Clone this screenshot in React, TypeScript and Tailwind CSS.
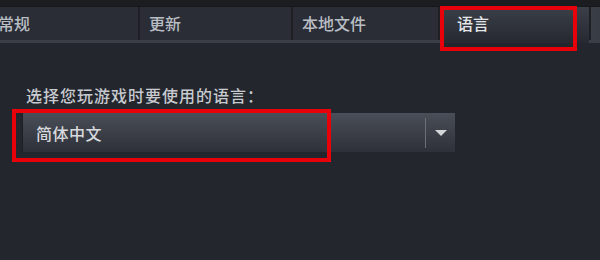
import React from "react";

const tabs = [
  { label: "常规", w: "w-[149px]", active: false },
  { label: "更新", w: "w-[151px]", active: false },
  { label: "本地文件", w: "w-[145px]", active: false },
  { label: "语言", w: "w-[149px]", active: true },
  { label: "", w: "w-[60px]", active: false },
];

export default function App() {
  return (
    <div
      className="relative w-[600px] h-[260px] overflow-hidden bg-[#23262d]"
      style={{ fontFamily: '"Noto Sans CJK SC", "Noto Sans", sans-serif' }}
    >
      <div className="h-[7px] bg-[#1b1d21] border-b border-[#15171a]" />
      <div className="flex items-start gap-[2px] ml-[-11px] h-[36px] bg-[#1d1f24] shadow-[inset_0_-3px_0_#3a3e46]">
        {tabs.map((t, i) =>
          t.active ? (
            <div
              key={i}
              className={`${t.w} h-[36px] shrink-0 pl-[17px] pt-[6px] text-[16px] leading-[20px] font-medium text-[#e4e6ea] bg-gradient-to-b from-[#3b3f48] to-[#262930]`}
            >
              {t.label}
            </div>
          ) : (
            <div
              key={i}
              className={`${t.w} h-[33px] shrink-0 pl-[9px] pt-[6px] text-[16px] leading-[20px] font-medium text-[#b9bdc4] bg-[#2a2d35] ${i === 4 ? "bg-gradient-to-r from-[#3a3e47] to-[#2a2d35]" : ""}`}
            >
              {t.label}
            </div>
          )
        )}
      </div>
      <div className="pl-[26px] pt-[42px] text-[16px] leading-[20px] font-medium text-[#c7cacf] tracking-[1px]">
        选择您玩游戏时要使用的语言：
      </div>
      <div className="ml-[22px] mt-[8px] w-[433px] h-[39px] flex items-center bg-gradient-to-b from-[#4a4e58] to-[#2e3139] border-l border-[#1c1e22]">
        <div className="flex-1 pl-[13px] text-[16px] leading-[20px] font-medium text-[#d8dade] tracking-[0.5px]">
          简体中文
        </div>
        <div className="w-px h-[30px] bg-[#6b6f77]" />
        <div className="w-[29px] flex justify-center">
          <svg width="12" height="6" viewBox="0 0 12 6">
            <polygon points="0,0 12,0 6,6" fill="#d4d6da" />
          </svg>
        </div>
      </div>
      <div className="absolute left-[440px] top-[6px] w-[137px] h-[45px] border-[4px] border-[#e8000b]" />
      <div className="absolute left-[12px] top-[109px] w-[319px] h-[53px] border-[4px] border-[#e8000b]" />
    </div>
  );
}
